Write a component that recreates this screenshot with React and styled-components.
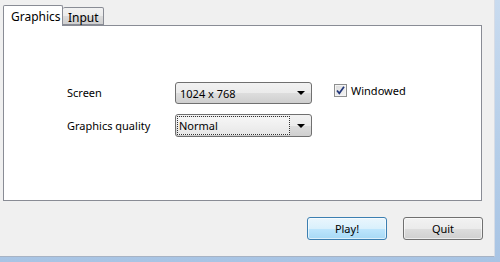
import React from 'react'
import styled, { createGlobalStyle } from 'styled-components'

const Global = createGlobalStyle`
  html, body { margin: 0; padding: 0; }
  body {
    width: 500px;
    height: 262px;
    overflow: hidden;
    font-family: "Noto Sans", "Open Sans", sans-serif;
    font-size: 11px;
    color: #000;
  }
`

const Frame = styled.div`
  width: 500px;
  height: 262px;
  background: linear-gradient(180deg, #c9dbef 0%, #b4cde8 60%, #a8c4e4 100%);
  display: flex;
  align-items: flex-start;
`

const Dialog = styled.div`
  box-sizing: border-box;
  width: 495px;
  height: 257px;
  background: #f0f0f0;
  border-right: 1px solid #d6dce6;
  border-bottom: 1px solid #a7b3c4;
  display: flex;
  flex-direction: column;
  padding: 5px 0 0 3px;
`

const TabBar = styled.div`
  display: flex;
  align-items: flex-end;
  height: 20px;
  position: relative;
  z-index: 1;
`

const Tab = styled.div`
  box-sizing: border-box;
  height: ${p => (p.$active ? '21px' : '18px')};
  margin-bottom: ${p => (p.$active ? '-1px' : '0')};
  padding: ${p => (p.$active ? '3px 0 0 7px' : '2px 0 0 5px')};
  width: ${p => p.$w}px;
  border: 1px solid #898c95;
  border-bottom: ${p => (p.$active ? 'none' : '1px solid #898c95')};
  border-left: ${p => (p.$active ? '1px solid #898c95' : 'none')};
  border-radius: 2px 2px 0 0;
  background: ${p =>
    p.$active ? '#fff' : 'linear-gradient(180deg, #f2f2f2 0%, #ebebeb 50%, #dcdcdc 51%, #cfcfcf 100%)'};
  font-size: 12px;
  line-height: 15px;
  white-space: nowrap;
`

const Pane = styled.div`
  box-sizing: border-box;
  width: 479px;
  height: 176px;
  background: #fff;
  border: 1px solid #898c95;
  padding: 55px 0 0 63px;
`

const Form = styled.div`
  display: grid;
  grid-template-columns: 108px 137px auto;
  grid-auto-rows: 23px;
  row-gap: 10px;
  align-items: center;
`

const Label = styled.div`
  line-height: 16px;
`

const Combo = styled.div`
  box-sizing: border-box;
  height: ${p => (p.$tall ? '23px' : '22px')};
  border: 1px solid #707070;
  border-radius: 3px;
  background: linear-gradient(180deg, #f2f2f2 0%, #ebebeb 50%, #dddddd 51%, #cfcfcf 100%);
  display: flex;
  align-items: center;
  padding: 1px;
`

const ComboText = styled.div`
  flex: 1;
  height: 100%;
  box-sizing: border-box;
  padding-left: ${p => (p.$focus ? '1px' : '2px')};
  line-height: 18px;
  border: ${p => (p.$focus ? '1px dotted #333' : '1px solid transparent')};
  background: ${p => (p.$focus ? 'linear-gradient(180deg, #f6f6f6 0%, #e8e8e8 100%)' : 'transparent')};
  margin-right: ${p => (p.$focus ? '2px' : '0')};
`

const Arrow = styled.div`
  width: 18px;
  height: 100%;
  display: flex;
  align-items: center;
  justify-content: center;
  &::after {
    content: '';
    width: 0;
    height: 0;
    border-left: 4px solid transparent;
    border-right: 4px solid transparent;
    border-top: 4px solid #000;
    margin-top: 1px;
  }
`

const Check = styled.label`
  display: flex;
  align-items: center;
  gap: 4px;
  margin-left: 22px;
  margin-top: -4px;
  line-height: 16px;
`

const Box = styled.span`
  box-sizing: border-box;
  width: 13px;
  height: 13px;
  border: 1px solid #8e8f8f;
  background: linear-gradient(135deg, #dcdcdc 0%, #f4f4f4 100%);
  box-shadow: inset 0 0 0 1px #f4f4f4;
  display: flex;
  align-items: center;
  justify-content: center;
`

const Buttons = styled.div`
  display: flex;
  justify-content: flex-end;
  gap: 16px;
  padding: 16px 11px 0 0;
`

const Button = styled.button`
  box-sizing: border-box;
  width: 80px;
  height: 23px;
  border-radius: 3px;
  font-family: inherit;
  font-size: 11px;
  color: #000;
  padding: 0;
  border: 1px solid ${p => (p.$default ? '#3c7fb1' : '#707070')};
  background: ${p =>
    p.$default
      ? 'linear-gradient(180deg, #eaf6fd 0%, #d9f0fc 50%, #bee6fd 51%, #a7d9f5 100%)'
      : 'linear-gradient(180deg, #f2f2f2 0%, #ebebeb 50%, #dddddd 51%, #cfcfcf 100%)'};
  box-shadow: inset 0 0 0 1px rgba(255, 255, 255, 0.6);
`

export default function App() {
  return (
    <>
      <Global />
      <Frame>
        <Dialog>
          <TabBar>
            <Tab $active $w={60}>Graphics</Tab>
            <Tab $w={41}>Input</Tab>
          </TabBar>
          <Pane>
            <Form>
              <Label>Screen</Label>
              <Combo>
                <ComboText>1024 x 768</ComboText>
                <Arrow />
              </Combo>
              <Check>
                <Box>
                  <svg width="11" height="11" viewBox="0 0 11 11">
                    <path d="M2 5.5 L4.3 8.3 L9 1.8" fill="none" stroke="#21367a" strokeWidth="1.7" />
                  </svg>
                </Box>
                Windowed
              </Check>
              <Label>Graphics quality</Label>
              <Combo $tall>
                <ComboText $focus>Normal</ComboText>
                <Arrow />
              </Combo>
              <span />
            </Form>
          </Pane>
          <Buttons>
            <Button $default>Play!</Button>
            <Button>Quit</Button>
          </Buttons>
        </Dialog>
      </Frame>
    </>
  )
}
